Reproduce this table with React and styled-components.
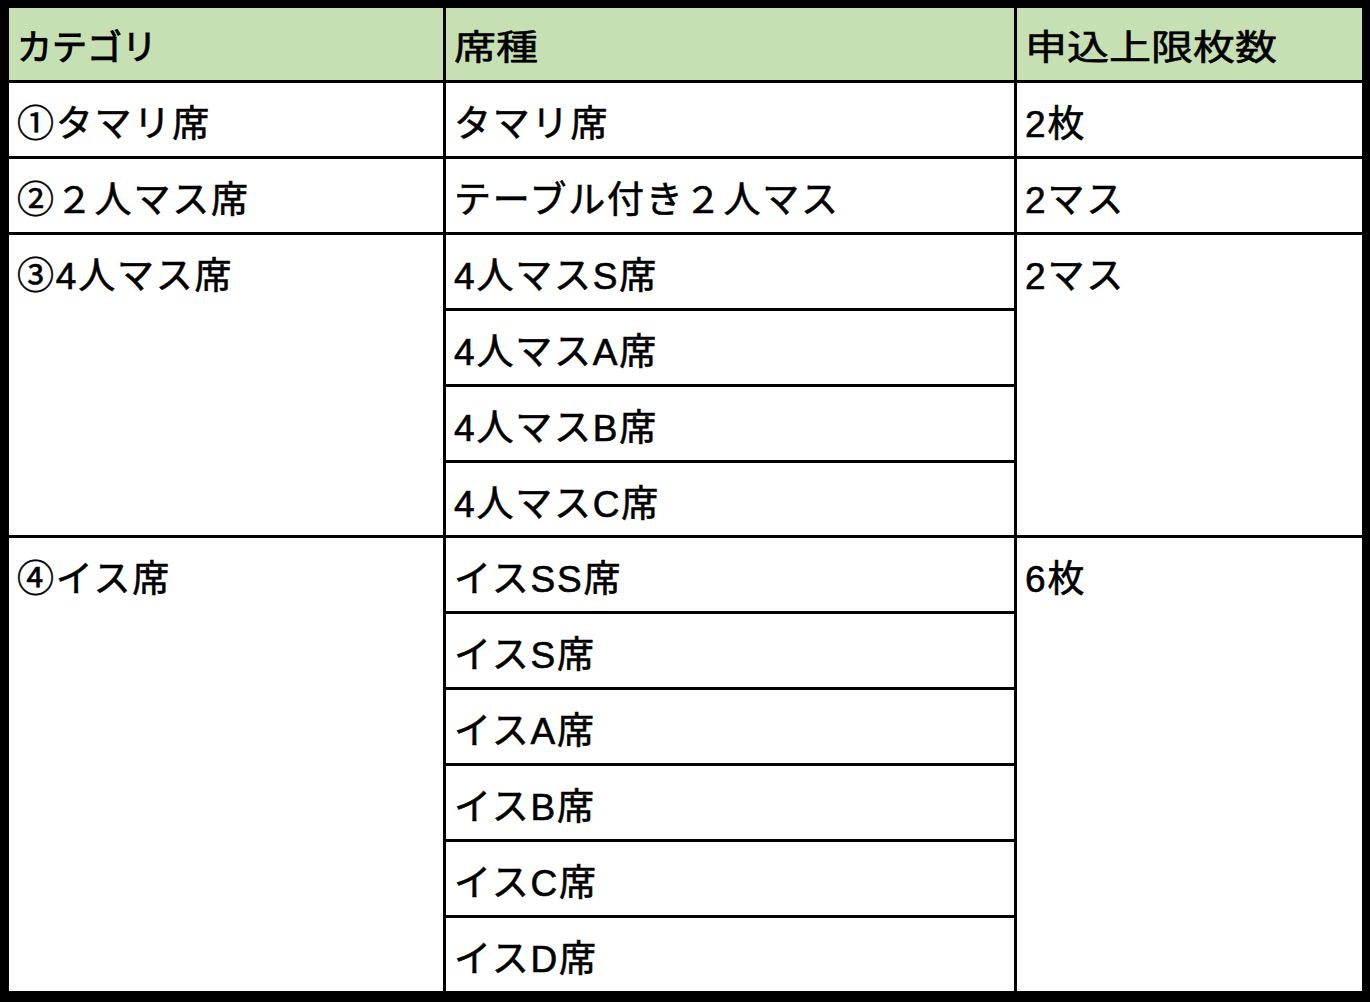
import React from "react";
import styled, { createGlobalStyle } from "styled-components";

const Global = createGlobalStyle`
  html, body {
    margin: 0;
    padding: 0;
    background: #000;
  }
  body {
    font-family: "Liberation Sans", "Noto Sans CJK JP", sans-serif;
  }
`;

const Frame = styled.div`
  box-sizing: border-box;
  width: 1370px;
  height: 1002px;
  padding: 8px 8px 11px 9px;
  background: #000;
`;

const Table = styled.div`
  display: grid;
  height: 100%;
  grid-template-columns: 434px 568px 345px;
  grid-template-rows: 72px repeat(12, 1fr);
  gap: 3px;
  background: #000;
`;

const HeadCell = styled.div`
  background: #c6e0b4;
  padding: 16px 8px 0;
  overflow: hidden;
`;

const HeadText = styled.span`
  display: inline-block;
  font-size: 35px;
  line-height: 48px;
  font-weight: 400;
  -webkit-text-stroke: ${(p) => (p.$stretch ? "0.6px" : "1px")} #000;
  color: #000;
  transform: scaleX(${(p) => (p.$stretch ? 1.2 : 1)});
  transform-origin: left center;
  white-space: nowrap;
`;

const Cell = styled.div`
  background: #fff;
  padding: 18px 8px 0;
  font-size: 37px;
  letter-spacing: 1.8px;
  line-height: 48px;
  font-weight: 400;
  -webkit-text-stroke: 0.6px #000;
  color: #000;
  white-space: nowrap;
  overflow: hidden;
  grid-row: ${(p) => (p.$span ? `span ${p.$span}` : "auto")};
`;

const groups = [
  { cat: "①タマリ席", seats: ["タマリ席"], limit: "2枚" },
  { cat: "②２人マス席", seats: ["テーブル付き２人マス"], limit: "2マス" },
  {
    cat: "③4人マス席",
    seats: ["4人マスS席", "4人マスA席", "4人マスB席", "4人マスC席"],
    limit: "2マス",
  },
  {
    cat: "④イス席",
    seats: ["イスSS席", "イスS席", "イスA席", "イスB席", "イスC席", "イスD席"],
    limit: "6枚",
  },
];

export default function App() {
  return (
    <>
      <Global />
      <Frame>
        <Table>
          <HeadCell>
            <HeadText>カテゴリ</HeadText>
          </HeadCell>
          <HeadCell>
            <HeadText $stretch>席種</HeadText>
          </HeadCell>
          <HeadCell>
            <HeadText $stretch>申込上限枚数</HeadText>
          </HeadCell>
          {groups.map((g) =>
            g.seats.map((s, i) => (
              <React.Fragment key={g.cat + s}>
                {i === 0 && <Cell $span={g.seats.length}>{g.cat}</Cell>}
                <Cell>{s}</Cell>
                {i === 0 && <Cell $span={g.seats.length}>{g.limit}</Cell>}
              </React.Fragment>
            ))
          )}
        </Table>
      </Frame>
    </>
  );
}
